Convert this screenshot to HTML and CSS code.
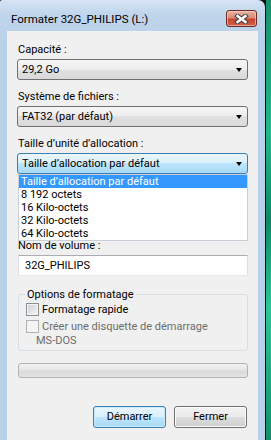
FILE: index.html
```html
<!DOCTYPE html>
<html lang="fr">
<head>
<meta charset="utf-8">
<title>Formater</title>
<link rel="stylesheet" href="styles.css">
</head>
<body>
<div class="screen">
  <div class="window">
    <div class="titlebar">
      <span class="title">Formater 32G_PHILIPS (L:)</span>
      <div class="close">
        <svg width="15" height="10" viewBox="0 0 15 10">
          <path d="M3.5 2 L11.5 8 M11.5 2 L3.5 8" stroke="#444" stroke-width="4.6" stroke-linecap="square" fill="none"/>
          <path d="M3.5 2 L11.5 8 M11.5 2 L3.5 8" stroke="#fff" stroke-width="2.4" stroke-linecap="square" fill="none"/>
        </svg>
      </div>
    </div>
    <div class="client">
      <div class="label">Capacité :</div>
      <div class="combo"><span>29,2 Go</span><i class="arrow"></i></div>
      <div class="label">Système de fichiers :</div>
      <div class="combo"><span>FAT32 (par défaut)</span><i class="arrow"></i></div>
      <div class="label">Taille d’unité d’allocation :</div>
      <div class="combo-wrap">
        <div class="combo focus"><span>Taille d’allocation par défaut</span><i class="arrow"></i></div>
        <ul class="droplist">
          <li class="sel">Taille d’allocation par défaut</li>
          <li>8 192 octets</li>
          <li>16 Kilo-octets</li>
          <li>32 Kilo-octets</li>
          <li>64 Kilo-octets</li>
        </ul>
      </div>
      <div class="label vol">Nom de volume :</div>
      <div class="input">32G_PHILIPS</div>
      <div class="group">
        <div class="legend">Options de formatage</div>
        <div class="check-row">
          <span class="box"></span><span>Formatage rapide</span>
        </div>
        <div class="check-row disabled">
          <span class="box"></span><span>Créer une disquette de démarrage</span>
        </div>
        <div class="msdos">MS-DOS</div>
      </div>
      <div class="progress"></div>
      <div class="buttons">
        <div class="btn default">Démarrer</div>
        <div class="btn">Fermer</div>
      </div>
    </div>
  </div>
  <div class="desktop"></div>
</div>
</body>
</html>
```
FILE: styles.css
```css
html, body {
  margin: 0;
  padding: 0;
  overflow: hidden;
}
body {
  font-family: Roboto, "Liberation Sans", sans-serif;
  font-size: 11px;
  color: #000;
  background: #0d6d52;
}
.screen {
  display: flex;
  width: 271px;
  height: 440px;
  background: #07140f;
}
.window {
  width: 265px;
  height: 440px;
  box-sizing: border-box;
  padding: 0 7px;
  display: flex;
  flex-direction: column;
  background: linear-gradient(#d6e4f4, #c0d5eb 14px, #bad1ea 40px, #bad1ea);
  border-top-right-radius: 7px;
  border-top-left-radius: 2px;
}
.desktop {
  width: 5px;
  margin-left: 1px;
  background: linear-gradient(160deg, #1a8f6c, #22b98a 30%, #0f8a64 50%, #2cc796 70%, #138e69);
}
.titlebar {
  height: 31px;
  display: flex;
  align-items: flex-start;
  justify-content: space-between;
}
.title {
  margin: 12px 0 0 4px;
  font-size: 11.5px;
  line-height: 15px;
  color: #000;
}
.close {
  margin: 10px 1px 0 0;
  width: 31px;
  height: 17px;
  box-sizing: border-box;
  border: 1px solid #6a2c24;
  border-radius: 3px;
  background: linear-gradient(#eab2a4, #dc8a76 45%, #c8452f 55%, #d0604a);
  box-shadow: inset 0 0 0 1px rgba(255, 220, 210, 0.55);
  display: flex;
  align-items: center;
  justify-content: center;
}
.close svg { display: block; }
.client {
  flex: 1;
  background: #f0f0f0;
  padding: 10px 10px 0 10px;
  display: flex;
  flex-direction: column;
}
.label {
  line-height: 15px;
  height: 15px;
  margin: 0 0 3px 1px;
  padding-top: 1px;
  box-sizing: border-box;
  white-space: nowrap;
}
.combo {
  position: relative;
  height: 21px;
  box-sizing: border-box;
  border: 1px solid #707070;
  border-radius: 3px;
  background: linear-gradient(#f6f6f6, #ededed 50%, #e1e1e1 50%, #d9d9d9);
  padding-left: 4px;
  line-height: 19px;
  margin-bottom: 8px;
  white-space: nowrap;
}
.combo.focus {
  border-color: #3c7fb1;
  background: linear-gradient(#eaf6fd, #d9f0fc 50%, #bee6fd 50%, #a7d9f5);
  margin-bottom: 0;
}
.arrow {
  position: absolute;
  right: 5px;
  top: 8px;
  width: 0;
  height: 0;
  border-left: 3.5px solid transparent;
  border-right: 3.5px solid transparent;
  border-top: 4px solid #000;
}
.combo-wrap {
  position: relative;
}
.droplist {
  position: absolute;
  top: 100%;
  left: 1px;
  right: 0;
  margin: 0;
  padding: 0;
  list-style: none;
  background: #fff;
  border: 1px solid #c9cfd8;
  z-index: 2;
}
.droplist li {
  height: 13px;
  line-height: 13px;
  padding-left: 2px;
  white-space: nowrap;
}
.droplist li.sel {
  background: #3399ff;
  color: #fff;
}
.label.vol {
  margin-top: 63px;
}
.input {
  height: 21px;
  box-sizing: border-box;
  margin-left: 1px;
  border: 1px solid #abadb3;
  border-color: #abadb3 #dbdfe6 #e3e9ef #e2e3ea;
  background: #fff;
  padding-left: 6px;
  line-height: 19px;
}
.group {
  position: relative;
  margin: 18px 0 0 1px;
  height: 57px;
  box-sizing: border-box;
  border: 1px solid #d5dfe5;
  border-radius: 3px;
  padding: 8px 0 0 7px;
}
.legend {
  position: absolute;
  top: -8px;
  left: 6px;
  padding: 0 2px 0 2px;
  background: #f0f0f0;
  line-height: 15px;
}
.check-row {
  display: flex;
  align-items: center;
  height: 13px;
  margin-bottom: 4px;
  white-space: nowrap;
}
.box {
  width: 13px;
  height: 13px;
  box-sizing: border-box;
  border: 1px solid #8e8f8f;
  background: linear-gradient(135deg, #cbcfd5, #f6f6f6);
  box-shadow: inset 0 0 0 1px #f4f4f4;
  margin-right: 3px;
  flex: none;
}
.check-row.disabled {
  color: #6d6d6d;
  margin-bottom: 0;
}
.check-row.disabled .box {
  border-color: #b1b1b1;
  background: #f4f4f4;
  box-shadow: none;
}
.msdos {
  color: #6d6d6d;
  line-height: 15px;
  margin-left: 10px;
}
.progress {
  margin: 12px 0 0 1px;
  height: 15px;
  box-sizing: border-box;
  border: 1px solid #b2b2b2;
  border-radius: 3px;
  background: linear-gradient(#f3f3f3, #e6e6e6 45%, #d9d9d9 55%, #e4e4e4);
}
.buttons {
  display: flex;
  justify-content: flex-end;
  gap: 8px;
  margin-top: 28px;
  padding-right: 1px;
}
.btn {
  width: 73px;
  height: 22px;
  box-sizing: border-box;
  border: 1px solid #707070;
  border-radius: 3px;
  background: linear-gradient(#f2f2f2, #ebebeb 50%, #dddddd 50%, #cfcfcf);
  box-shadow: inset 0 0 0 1px #fcfcfc;
  text-align: center;
  line-height: 20px;
}
.btn.default {
  border-color: #3c7fb1;
  background: linear-gradient(#eaf6fd, #d9f0fc 50%, #bee6fd 50%, #a7d9f5);
  box-shadow: inset 0 0 0 1px #c8eafc;
}
```
